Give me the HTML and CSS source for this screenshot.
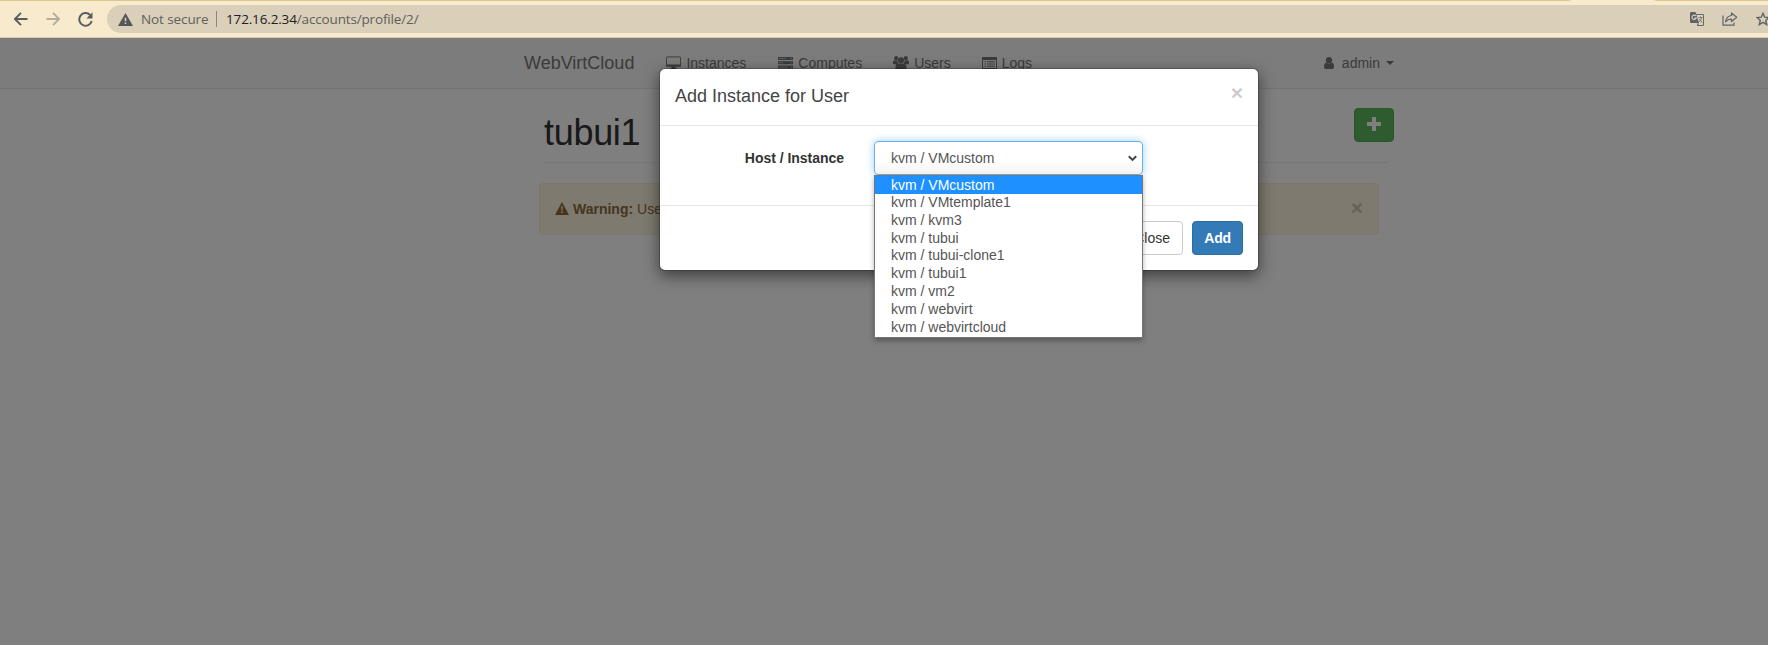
FILE: index.html
```html
<!DOCTYPE html>
<html lang="en">
<head>
<meta charset="utf-8">
<title>WebVirtCloud</title>
<link rel="stylesheet" href="styles.css">
</head>
<body>
<header class="toolbar">
  <svg class="tool" width="14" height="14" viewBox="0 0 14 14"><path d="M13.5 7H1.5M7 .9L.9 7L7 13.100" fill="none" stroke="#5a5c60" stroke-width="1.9"/></svg>
  <svg class="tool fwd" width="14" height="14" viewBox="0 0 14 14"><path d="M.5 7H12.500M7 .9L13.100 7L7 13.100" fill="none" stroke="#b5ad9b" stroke-width="1.900"/></svg>
  <svg class="tool reload" width="15" height="15" viewBox="0 0 15 15"><path d="M12.200 3.100A6.300 6.300 0 1 0 13.700 9" fill="none" stroke="#5a5c60" stroke-width="2"/><path d="M14.500 .3V6.400H8.400Z" fill="#5a5c60"/></svg>
  <div class="address">
    <svg class="insecure" width="15" height="13" viewBox="0 0 15 13"><path d="M7.500 0L15 13H0Z" fill="#55575b"/><path d="M6.700 4.700h1.600v3.600H6.700zM6.700 9.500h1.600v1.600H6.700z" fill="#dacfb8"/></svg>
    <span class="notsecure">Not secure</span>
    <span class="divider"></span>
    <span class="url"><b>172.16.2.34</b>/accounts/profile/2/</span>
    <span class="actions">
      <svg width="14" height="14" viewBox="0 0 14 14"><path d="M5 2.500H13.500V13.500H7" fill="none" stroke="#6b6b68"/><path d="M1 0H5.500L9 11H1Q0 11 0 10V1Q0 0 1 0M7 11.500H9L7.500 14Z" fill="#5f6368"/><path d="M6 4A2.200 2.200 0 1 0 6.300 6H4.300" fill="none" stroke="#dacfb8" stroke-width="1.100"/><path d="M8.500 5.500H12.500M10.500 4.500V5.500M11.700 5.500Q11 8.500 9 10M9.300 7L12.300 10.500" fill="none" stroke="#77756d" stroke-width=".9"/></svg>
      <svg width="16" height="14" viewBox="0 0 16 14"><path d="M1 3.500V13.200H12V10.500" fill="none" stroke="#5f6368" stroke-width="1.200"/><path d="M9.500 1L14.700 5.300L9.500 9.500V7.200Q6 7 3.600 9.800Q4.300 4.200 9.500 3.500Z" fill="none" stroke="#5f6368" stroke-width="1.200" stroke-linejoin="round"/></svg>
      <svg width="14" height="14" viewBox="0 0 14 14"><path d="M7 1.300L8.700 5.200L12.900 5.600L9.700 8.400L10.700 12.600L7 10.400L3.300 12.600L4.300 8.400L1.100 5.600L5.300 5.200Z" fill="none" stroke="#5f6368" stroke-width="1.400"/></svg>
    </span>
  </div>
</header>

<div class="viewport">
  <nav class="navbar">
    <div class="nav-inner">
      <span class="brand">WebVirtCloud</span>
      <ul class="links">
        <li><svg width="15" height="14" viewBox="0 0 16 14"><path d="M1.200 .5H14.800Q15.500 .5 15.500 1.200V10.500H.5V1.200Q.5 .5 1.200 .5Z" fill="none" stroke="currentColor"/><path d="M.5 8.500H15.500V10.500H.5zM6 10.500H10V12H11.500V14H4.500V12H6z" fill="currentColor"/></svg>Instances</li>
        <li><svg width="15" height="12" viewBox="0 0 15 12"><path d="M0 0H15V3H0zM0 4.300H15V7.300H0zM0 8.600H15V11.600H0z" fill="currentColor"/><path d="M1 1.500H8M1 5.800H5M1 10.100H10M12.500 1.500H14M12.500 5.800H14M12.500 10.100H14" stroke="#ccc" stroke-width=".8"/></svg>Computes</li>
        <li><svg width="16" height="14" viewBox="0 0 16 14"><g fill="currentColor"><circle cx="3.200" cy="2.200" r="2.100"/><circle cx="12.800" cy="2.200" r="2.100"/><circle cx="8" cy="4.300" r="3"/><path d="M0 8V6Q0 4.300 1.500 4.300H4.300Q4.300 6.400 5.400 7.300L4 8.200H.8zM16 8V6Q16 4.300 14.500 4.300H11.700Q11.700 6.400 10.600 7.300L12 8.200H15.200zM2.500 14V11Q2.500 7.600 5.500 7.600H10.500Q13.500 7.600 13.500 11V14z"/></g></svg>Users</li>
        <li><svg width="15" height="12" viewBox="0 0 15 12"><path d="M.5 .5H14.500V11.500H.5z" fill="none" stroke="currentColor"/><path d="M0 0H15V3H0zM2.500 4.300H4V5.300H2.500zM5 4.300H12.800V5.300H5zM2.500 6.500H4V7.500H2.500zM5 6.500H12.800V7.500H5zM2.500 8.700H4V9.700H2.500zM5 8.700H12.800V9.700H5z" fill="currentColor"/></svg>Logs</li>
      </ul>
      <span class="account"><svg width="10" height="12" viewBox="0 0 10 12"><circle cx="5" cy="3.200" r="3.100" fill="currentColor"/><path d="M0 10Q0 5.400 2.500 5.400Q5 7.800 7.500 5.400Q10 5.400 10 10Q10 12 8.300 12H1.700Q0 12 0 10Z" fill="currentColor"/></svg>admin<i class="caret"></i></span>
    </div>
  </nav>
  <main class="content">
    <div class="page-header">
      <h1>tubui1</h1>
      <button class="btn-plus"><svg width="14" height="14" viewBox="0 0 14 14"><path d="M5 0H9V5H14V9H9V14H5V9H0V5H5Z" fill="#fff"/></svg></button>
    </div>
    <div class="alert">
      <svg width="14" height="13" viewBox="0 0 14 13"><path d="M7 0L14 13H0Z" fill="#8a6d3b"/><path d="M6.200 4.300H7.800L7.500 8.500H6.500zM6.200 9.500H7.800V11H6.200z" fill="#fcf8e3"/></svg>
      <span><strong>Warning:</strong> User doesn't have any Instance</span>
      <span class="x">×</span>
    </div>
  </main>

  <div class="backdrop">
    <section class="modal">
      <div class="modal-head"><h4>Add Instance for User</h4><span class="x">×</span></div>
      <div class="modal-body">
        <label>Host / Instance</label>
        <div class="select">kvm / VMcustom
          <svg width="9" height="7" viewBox="0 0 9 7"><path d="M.8 1.200L4.500 4.900L8.200 1.200" fill="none" stroke="#444" stroke-width="2"/></svg>
          <ul class="options">
            <li class="on">kvm / VMcustom</li>
            <li>kvm / VMtemplate1</li>
            <li>kvm / kvm3</li>
            <li>kvm / tubui</li>
            <li>kvm / tubui-clone1</li>
            <li>kvm / tubui1</li>
            <li>kvm / vm2</li>
            <li>kvm / webvirt</li>
            <li>kvm / webvirtcloud</li>
          </ul>
        </div>
      </div>
      <div class="modal-foot"><button class="btn">Close</button><button class="btn primary">Add</button></div>
    </section>
  </div>
</div>
</body>
</html>
```
FILE: styles.css
```css
* { box-sizing: border-box; }
body { margin: 0; height: 645px; overflow: hidden; display: flex; flex-direction: column; font: 14px/20px "Liberation Sans", Arial, sans-serif; color: #333; background: #fff; }
ul { list-style: none; margin: 0; padding: 0; }
h1, h4 { margin: 0; font-weight: 400; }
svg { display: block; flex: none; }
button { font: inherit; }

.toolbar { flex: none; height: 38px; display: flex; align-items: center; background: linear-gradient(90deg, #dfc792 1569px, #f8ebcd 1571px, #f8ebcd 1654px, #dfc792 1656px) 0 0 / 100% 1px no-repeat #f8ebcd; border-bottom: 1px solid #d5cbb4; padding: 1px 0 0 14px; overflow: hidden; }
.fwd { margin-left: 18px; }
.reload { margin-left: 18px; }
.address { margin-left: 14px; flex: 1; height: 28px; border-radius: 14px 0 0 14px; background: #dacfb8; display: flex; align-items: center; padding-left: 11px; font: 13.500px/26px "Open Sans", "Noto Sans", sans-serif; color: #5f6060; white-space: nowrap; }
.notsecure { margin-left: 8px; width: 67px; letter-spacing: -.1px; }
.divider { width: 1px; height: 16px; background: #8d877b; margin: 0 9px 0 8px; }
.url { letter-spacing: -.15px; }
.url b { font-weight: 400; color: #202124; }
.actions { margin-left: auto; display: flex; align-items: center; gap: 18px; margin-right: -2px; }

.viewport { flex: 1; position: relative; }
.navbar { height: 51px; background: #f8f8f8; border-bottom: 1px solid #e7e7e7; color: #777; }
.nav-inner { width: 870px; margin-left: 524px; height: 50px; display: flex; align-items: center; }
.brand { font-size: 18px; }
.links { display: flex; gap: 31px; margin-left: 32px; }
.links li { display: flex; align-items: center; gap: 5px; }
.links li:first-child { margin-right: 1px; }
.account { margin-left: auto; display: flex; align-items: center; }
.account svg { margin-right: 8px; }
.caret { border-top: 4px solid; border-left: 4px solid transparent; border-right: 4px solid transparent; margin-left: 6px; }

.content { width: 850px; margin-left: 539px; }
.page-header { margin-left: 5px; width: 845px; height: 74px; border-bottom: 1px solid #eee; display: flex; justify-content: space-between; align-items: flex-start; }
.page-header h1 { font-size: 36px; line-height: 40px; margin-top: 24px; letter-spacing: -.3px; }
.btn-plus { width: 40px; height: 34px; margin: 19px -5px 0 0; padding: 0; display: flex; align-items: center; justify-content: center; background: #5cb85c; border: 1px solid #4cae4c; border-radius: 4px; }
.btn-plus svg { margin: -2px 0 0 -1px; }
.alert { width: 840px; height: 52px; margin-top: 20px; padding: 0 15px; display: flex; align-items: center; gap: 4px; background: #fcf4e1; border: 1px solid #faebcc; border-radius: 4px; color: #8a6d3b; }
.alert svg { margin-top: -2px; }
.x { margin-left: auto; font-size: 21px; line-height: 21px; font-weight: 700; color: #000; opacity: .2; }
.alert .x { margin-top: -4px; }

.backdrop { position: absolute; inset: 0; background: rgba(0,0,0,.5); padding: 30px 0 0 659px; }
.modal { width: 600px; background: #fff; background-clip: padding-box; border: 1px solid rgba(0,0,0,.2); border-radius: 6px; box-shadow: 0 5px 15px rgba(0,0,0,.5); }
.modal-head { height: 57px; padding: 15px; display: flex; align-items: flex-start; border-bottom: 1px solid #e5e5e5; }
.modal-head h4 { font-size: 18px; line-height: 25px; color: #444; }
.modal-head .x { margin-top: -2px; }
.modal-body { height: 79px; padding: 15px; display: flex; align-items: flex-start; }
.modal-body label { width: 169px; text-align: right; font-weight: 700; line-height: 34px; letter-spacing: -.03px; }
.select { position: relative; width: 269px; height: 34px; margin-left: 30px; padding: 0 5px 0 16px; display: flex; align-items: center; justify-content: space-between; color: #555; border: 1px solid #66afe9; border-radius: 4px; background: linear-gradient(#fff 60%, #f3f3f3); box-shadow: 0 0 8px rgba(102,175,233,.6); }
.options { position: absolute; top: 33px; left: -1px; width: 269px; height: 163px; border: 1px solid #767676; background: #fff; box-shadow: 0 3px 5px rgba(0,0,0,.3); z-index: 1; }
.options li { height: 17.800px; line-height: 17.800px; padding-left: 16px; }
.options .on { background: #1e90ff; color: #fff; height: 18px; line-height: 18px; }
.modal-foot { height: 65px; border-top: 1px solid #e5e5e5; padding: 15px 15px 0; display: flex; justify-content: flex-end; gap: 9px; }
.btn { height: 34px; padding: 0 12px; border: 1px solid #ccc; border-radius: 4px; background: #fff; color: #333; }
.btn.primary { width: 51px; padding: 0; background: #337ab7; border-color: #2e6da4; color: #fff; font-weight: 700; letter-spacing: -.3px; }
```
